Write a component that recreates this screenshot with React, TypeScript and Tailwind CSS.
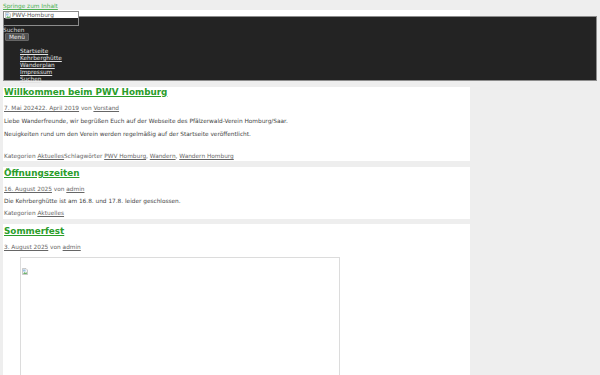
import React from "react";

const navItems = ["Startseite", "Kehrberghütte", "Wanderplan", "Impressum", "Suchen"];

function BrokenImage() {
  return (
    <svg width="6" height="7" viewBox="0 0 12 14" className="inline-block shrink-0">
      <path d="M1 1h7l3 3v9H1z" fill="#f4f4f4" stroke="#9a9a9a" strokeWidth="1" />
      <path d="M2 12l3-4 2 2 2-2 1 4z" fill="#6db36d" />
      <rect x="2" y="3" width="5" height="4" fill="#9cc4e8" />
    </svg>
  );
}

function Meta({ dates, author }: { dates: string[]; author: string }) {
  return (
    <p className="mt-[6px] text-[5.8px] leading-[8px] text-[#666]">
      {dates.map((d) => (
        <a key={d} className="underline">
          {d}
        </a>
      ))}{" "}
      von <a className="underline">{author}</a>
    </p>
  );
}

function PostTitle({ children }: { children: React.ReactNode }) {
  return (
    <h2 className="text-[8.8px] leading-[11px] font-bold text-[#2a9d2a] underline">{children}</h2>
  );
}

export default function App() {
  return (
    <div className="min-h-screen bg-[#eeeeee] font-['DejaVu_Sans',sans-serif] text-[#444]">
      <a className="block pl-[3px] pt-[3px] text-[5.8px] leading-[7px] text-[#4caf50] underline">
        Springe zum Inhalt
      </a>

      <header className="ml-[3px]">
        <div className="h-[6px] w-[467px] bg-white" />
        <div className="w-[594px] h-[65px] border border-[#8c8c8c] bg-[#232323]">
          <div className="-mt-[6px] w-[76px] h-[15px] border border-[#8c8c8c] -ml-px">
            <div className="flex items-center gap-px h-[6px] bg-white pl-px text-[5.8px] leading-[6px] text-[#555]">
              <BrokenImage />
              <span>PWV-Homburg</span>
            </div>
          </div>
          <p className="-ml-px mt-[1px] text-[5.8px] leading-[6px] text-[#ddd]">Suchen</p>
          <button className="ml-px block rounded-[1px] border border-[#666] bg-[#505050] px-[3px] h-[8px] text-[5.8px] leading-[6px] text-[#eee]">
            Menü
          </button>
          <ul className="mt-[7px] pl-[16px] text-[5.8px] leading-[7px] text-[#e2e2e2]">
            {navItems.map((n) => (
              <li key={n}>
                <a className="underline">{n}</a>
              </li>
            ))}
          </ul>
        </div>
      </header>

      <main className="ml-[3px] w-[467px]">
        <article className="mt-[6px] h-[74px] bg-white pl-px flex flex-col">
          <PostTitle>Willkommen beim PWV Homburg</PostTitle>
          <Meta dates={["7. Mai 2024", "22. April 2019"]} author="Vorstand" />
          <p className="mt-[5px] text-[5.8px] leading-[8px]">
            Liebe Wanderfreunde, wir begrüßen Euch auf der Webseite des Pfälzerwald-Verein Homburg/Saar.
          </p>
          <p className="mt-[5px] text-[5.8px] leading-[8px]">
            Neuigkeiten rund um den Verein werden regelmäßig auf der Startseite veröffentlicht.
          </p>
          <p className="mt-auto mb-[1px] text-[5.8px] leading-[8px] text-[#666]">
            Kategorien <a className="underline">Aktuelles</a>Schlagwörter{" "}
            <a className="underline">PWV Homburg</a>, <a className="underline">Wandern</a>,{" "}
            <a className="underline">Wandern Homburg</a>
          </p>
        </article>

        <article className="mt-[6px] h-[52px] bg-white pl-px pt-px flex flex-col">
          <PostTitle>Öffnungszeiten</PostTitle>
          <Meta dates={["16. August 2025"]} author="admin" />
          <p className="mt-[4px] text-[5.8px] leading-[8px]">
            Die Kehrberghütte ist am 16.8. und 17.8. leider geschlossen.
          </p>
          <p className="mt-[4px] text-[5.8px] leading-[8px] text-[#666]">
            Kategorien <a className="underline">Aktuelles</a>
          </p>
        </article>

        <article className="mt-[5px] h-[160px] bg-white pl-px pt-[2px]">
          <PostTitle>Sommerfest</PostTitle>
          <Meta dates={["3. August 2025"]} author="admin" />
          <div className="ml-[16px] mt-[6px] h-[140px] w-[320px] border border-[#dcdcdc] p-px">
            <BrokenImage />
          </div>
        </article>
      </main>
    </div>
  );
}
